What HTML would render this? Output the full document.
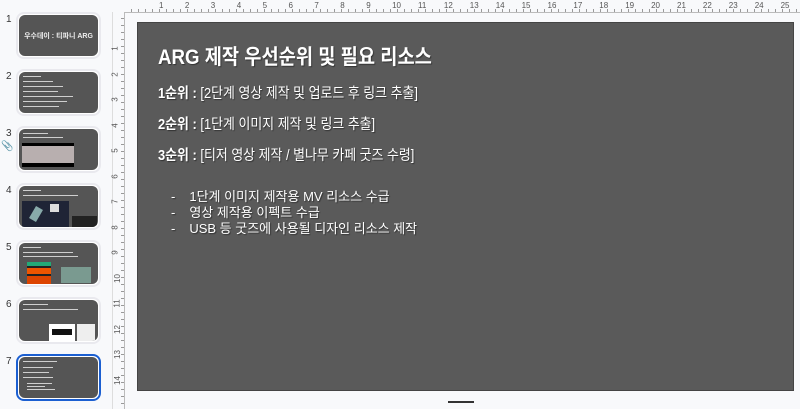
<!DOCTYPE html>
<html><head><meta charset="utf-8"><style>
*{margin:0;padding:0;box-sizing:border-box}
body{width:800px;height:409px;overflow:hidden;background:#f8f9fb;font-family:"Liberation Sans","Noto Sans CJK KR",sans-serif;position:relative}
.num{position:absolute;left:6px;font-size:10px;color:#333}
.th{position:absolute;left:16px;width:85px;height:47px;border:2px solid #e9e9ee;border-radius:8px;background:#fff;padding:1px}
.th div.in{width:100%;height:100%;background:#555;border-radius:6px;position:relative;overflow:hidden}
.th.sel{border-color:#1b5fd1}
.l{position:absolute;height:1px;background:#cfcfcf}
#slide{position:absolute;left:137px;top:22px;width:657px;height:369px;background:#5a5a5a;border:1px solid #444;color:#fff;text-shadow:1px 1px 1px rgba(0,0,0,.45)}
.rn{position:absolute;font-size:8px;color:#555}
.sx{transform:scaleX(.89);transform-origin:left top}
</style></head><body>
<div style="position:absolute;left:125px;top:0;width:675px;height:13px;border-bottom:1px solid #bbb;background:repeating-linear-gradient(90deg,transparent 0 6px,#999 6px 7px) bottom/100% 3px no-repeat"></div>
<div style="position:absolute;left:112px;top:12px;width:13px;height:397px;border-left:1px solid #ddd;border-right:1px solid #bbb;background:repeating-linear-gradient(180deg,transparent 0 6px,#999 6px 7px) right/3px 100% no-repeat"></div>
<div id="rul"></div>
<script>
var h='';for(var i=1;i<=25;i++){h+='<div class="rn" style="left:'+(159+(i-1)*25.9)+'px;top:1px">'+i+'</div>'}
for(var j=1;j<=14;j++){h+='<div class="rn" style="left:113px;top:'+(44+(j-1)*25.5)+'px;transform:rotate(-90deg)">'+j+'</div>'}
document.getElementById('rul').innerHTML=h;
</script>
<div class="num" style="top:14px">1</div>
<div class="th" style="top:12px"><div class="in"><div style="position:absolute;top:16px;width:100%;text-align:center;font-size:7px;font-weight:bold;color:#eee">우수데이 : 티파니 ARG</div></div></div>
<div class="num" style="top:71px">2</div>
<div class="th" style="top:69px"><div class="in">
<div class="l" style="left:4px;top:4px;width:18px"></div><div class="l" style="left:4px;top:9px;width:30px"></div><div class="l" style="left:4px;top:14px;width:40px"></div><div class="l" style="left:4px;top:19px;width:35px"></div><div class="l" style="left:4px;top:24px;width:50px"></div><div class="l" style="left:4px;top:29px;width:44px"></div><div class="l" style="left:4px;top:34px;width:36px"></div></div></div>
<div class="num" style="top:128px">3</div>
<div style="position:absolute;left:1px;top:141px;font-size:10px;color:#444">&#128206;</div>
<div class="th" style="top:126px"><div class="in">
<div class="l" style="left:4px;top:4px;width:25px"></div><div class="l" style="left:4px;top:8px;width:40px"></div>
<div style="position:absolute;left:3px;top:14px;width:52px;height:24px;background:#000"><div style="margin-top:3px;height:17px;background:#b8afaf"></div></div></div></div>
<div class="num" style="top:185px">4</div>
<div class="th" style="top:183px"><div class="in">
<div class="l" style="left:4px;top:4px;width:18px"></div><div class="l" style="left:4px;top:9px;width:55px"></div>
<div style="position:absolute;left:3px;top:15px;width:47px;height:29px;background:#1f2436"><div style="position:absolute;left:10px;top:6px;width:8px;height:14px;background:#8aa;transform:rotate(30deg)"></div><div style="position:absolute;left:28px;top:3px;width:9px;height:8px;background:#ddd"></div></div>
<div style="position:absolute;left:53px;top:30px;width:25px;height:14px;background:#222"></div></div></div>
<div class="num" style="top:242px">5</div>
<div class="th" style="top:240px"><div class="in">
<div class="l" style="left:4px;top:4px;width:18px"></div><div class="l" style="left:4px;top:9px;width:50px"></div><div class="l" style="left:4px;top:13px;width:55px"></div>
<div style="position:absolute;left:8px;top:19px;width:24px;height:24px;background:linear-gradient(#2a7 0 4px,#222 4px 6px,#e50 6px 12px,#222 12px 14px,#d40 14px)"></div>
<div style="position:absolute;left:42px;top:24px;width:30px;height:16px;background:#7a9a90"></div></div></div>
<div class="num" style="top:299px">6</div>
<div class="th" style="top:297px"><div class="in">
<div class="l" style="left:4px;top:4px;width:25px"></div><div class="l" style="left:4px;top:9px;width:55px"></div>
<div style="position:absolute;left:30px;top:24px;width:26px;height:19px;background:#fff"><div style="margin:5px 3px;height:6px;background:#111"></div></div>
<div style="position:absolute;left:58px;top:24px;width:18px;height:19px;background:#eee"></div></div></div>
<div class="num" style="top:356px">7</div>
<div class="th sel" style="top:354px"><div class="in">
<div class="l" style="left:4px;top:4px;width:34px"></div><div class="l" style="left:4px;top:10px;width:30px"></div><div class="l" style="left:4px;top:15px;width:26px"></div><div class="l" style="left:4px;top:20px;width:30px"></div><div class="l" style="left:8px;top:26px;width:25px"></div><div class="l" style="left:8px;top:29px;width:18px"></div><div class="l" style="left:8px;top:32px;width:28px"></div></div></div>
<div id="slide">
<div class="sx" style="position:absolute;left:20px;top:18px;font-size:21px;font-weight:bold;white-space:nowrap">ARG 제작 우선순위 및 필요 리소스</div>
<div class="sx" style="position:absolute;left:20px;top:59px;font-size:14.5px;white-space:nowrap"><b>1순위 :</b> [2단계 영상 제작 및 업로드 후 링크 추출]</div>
<div class="sx" style="position:absolute;left:20px;top:90px;font-size:14.5px;white-space:nowrap"><b>2순위 :</b> [1단계 이미지 제작 및 링크 추출]</div>
<div class="sx" style="position:absolute;left:20px;top:121px;font-size:14.5px;white-space:nowrap"><b>3순위 :</b> [티저 영상 제작 / 별나무 카페 굿즈 수령]</div>
<div style="position:absolute;left:33px;top:166px;font-size:13px;line-height:16px;white-space:nowrap">
<div>-<span style="margin-left:14px">1단계 이미지 제작용 MV 리소스 수급</span></div>
<div>-<span style="margin-left:14px">영상 제작용 이펙트 수급</span></div>
<div>-<span style="margin-left:14px">USB 등 굿즈에 사용될 디자인 리소스 제작</span></div>
</div>
</div>
<div style="position:absolute;left:448px;top:401px;width:26px;height:2px;background:#333"></div>
</body></html>
